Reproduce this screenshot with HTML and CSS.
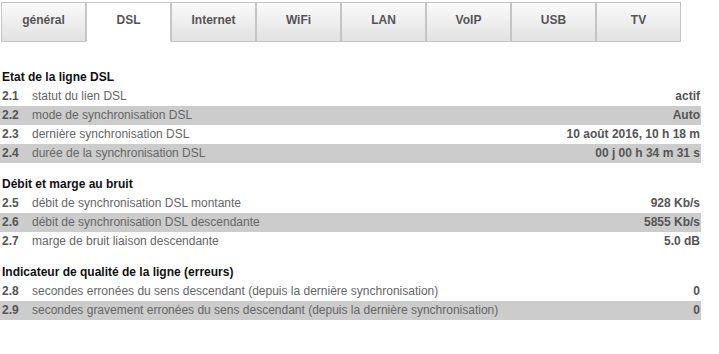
FILE: index.html
```html
<!DOCTYPE html>
<html lang="fr">
<head>
    <meta charset="UTF-8">
    <title>DSL</title>
    <link rel="stylesheet" href="styles.css">
</head>
<body>
    <div class="tabs">
        <div class="tab">général</div>
        <div class="tab active">DSL</div>
        <div class="tab">Internet</div>
        <div class="tab">WiFi</div>
        <div class="tab">LAN</div>
        <div class="tab">VoIP</div>
        <div class="tab">USB</div>
        <div class="tab">TV</div>
    </div>

    <div class="content">
        <h3 class="first">Etat de la ligne DSL</h3>
        <div class="row"><span class="num">2.1</span><span class="label">statut du lien DSL</span><span class="value">actif</span></div>
        <div class="row alt"><span class="num">2.2</span><span class="label">mode de synchronisation DSL</span><span class="value">Auto</span></div>
        <div class="row"><span class="num">2.3</span><span class="label">dernière synchronisation DSL</span><span class="value">10 août 2016, 10 h 18 m</span></div>
        <div class="row alt"><span class="num">2.4</span><span class="label">durée de la synchronisation DSL</span><span class="value">00 j 00 h 34 m 31 s</span></div>

        <h3>Débit et marge au bruit</h3>
        <div class="row"><span class="num">2.5</span><span class="label">débit de synchronisation DSL montante</span><span class="value">928 Kb/s</span></div>
        <div class="row alt"><span class="num">2.6</span><span class="label">débit de synchronisation DSL descendante</span><span class="value">5855 Kb/s</span></div>
        <div class="row"><span class="num">2.7</span><span class="label">marge de bruit liaison descendante</span><span class="value">5.0 dB</span></div>

        <h3>Indicateur de qualité de la ligne (erreurs)</h3>
        <div class="row"><span class="num">2.8</span><span class="label">secondes erronées du sens descendant (depuis la dernière synchronisation)</span><span class="value">0</span></div>
        <div class="row alt"><span class="num">2.9</span><span class="label">secondes gravement erronées du sens descendant (depuis la dernière synchronisation)</span><span class="value">0</span></div>
    </div>
</body>
</html>
```

FILE: styles.css
```css
body {
    font-family: "Liberation Sans", Arial, sans-serif;
    font-size: 12px;
    background-color: #fff;
    color: #666;
    margin: 0;
    padding: 0;
}
.tabs {
    display: flex;
    padding: 2px 0 0 1px;
}
.tab {
    width: 85px;
    height: 40px;
    box-sizing: border-box;
    padding-top: 10px;
    border: 1px solid #c4c4c4;
    background: linear-gradient(#fafafa, #e2e2e2);
    color: #555;
    font-weight: bold;
    text-align: center;
}
.tab.active {
    background: #fff;
    border-bottom-color: #fff;
    border-color: #c8c8c8 #c8c8c8 #fff;
}
.content {
    width: 701px;
    margin-top: 26px;
}
h3 {
    margin: 12px 0 0 0;
    padding-left: 2px;
    height: 19px;
    line-height: 19px;
    font-size: 12px;
    color: #111;
}
h3.first {
    margin-top: 0;
}
.row {
    display: flex;
    height: 19px;
    line-height: 19px;
    padding: 0 1px 0 2px;
}
.row.alt {
    background-color: #cccccc;
}
.num {
    width: 30px;
    flex-shrink: 0;
    font-weight: bold;
    color: #555;
}
.label {
    flex: 1;
    color: #666;
}
.value {
    font-weight: bold;
    color: #555;
    text-align: right;
}
```
